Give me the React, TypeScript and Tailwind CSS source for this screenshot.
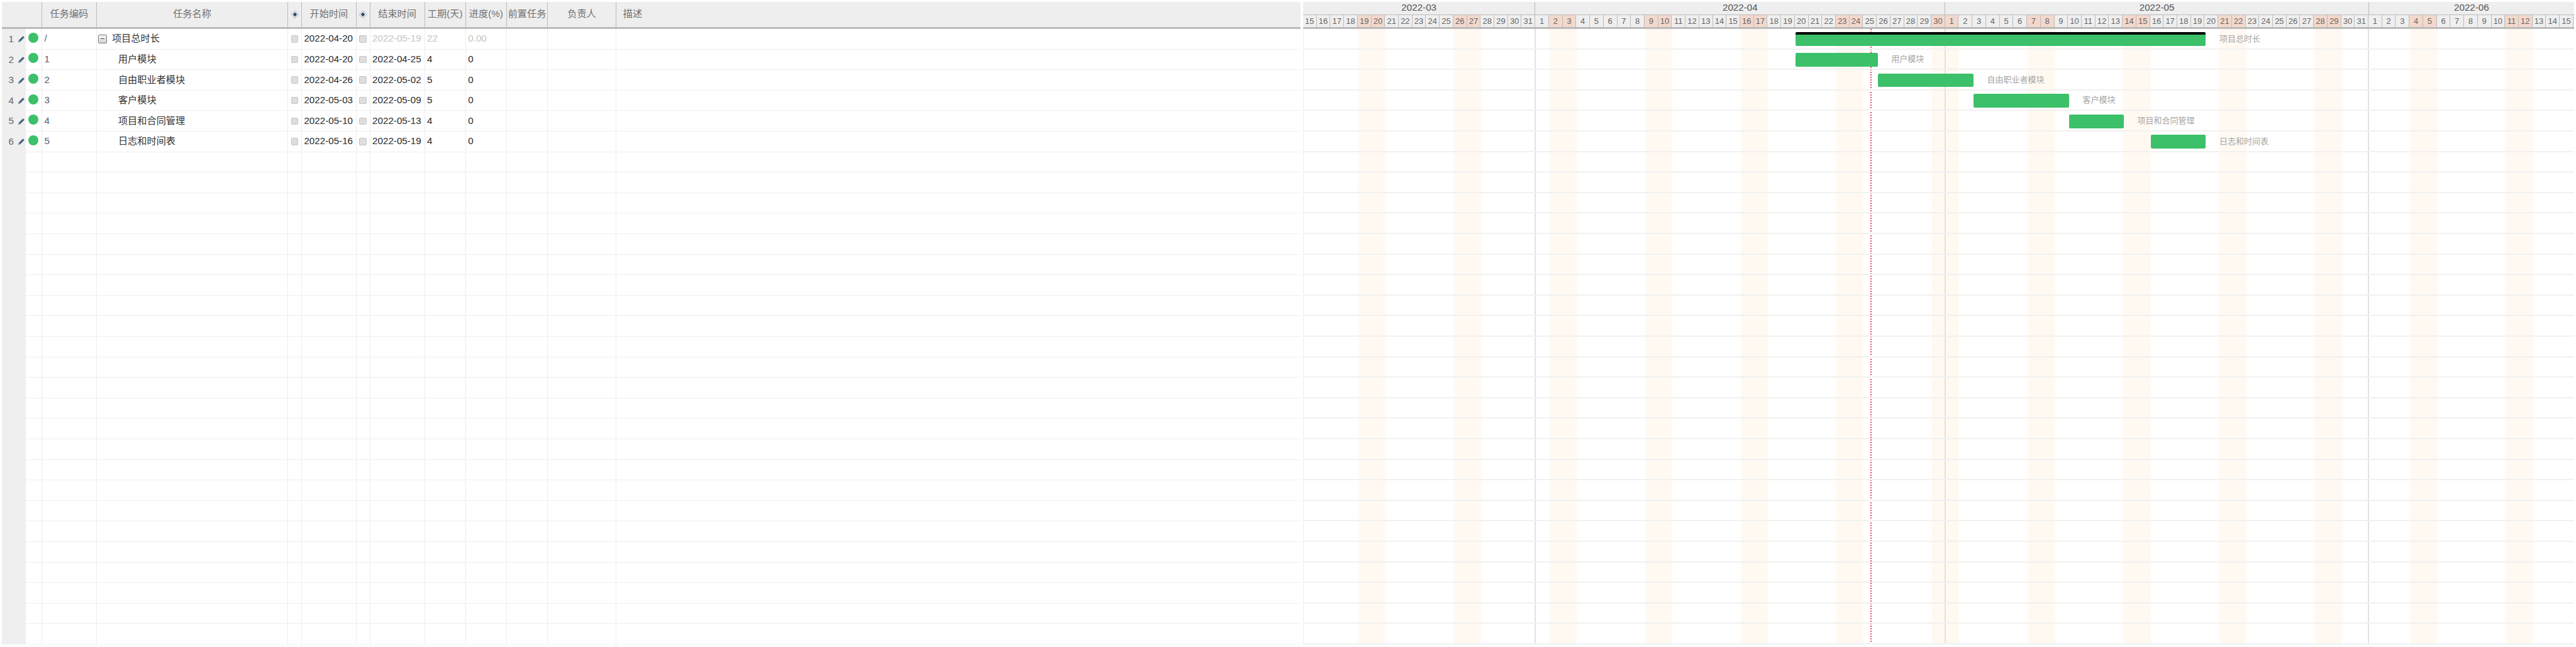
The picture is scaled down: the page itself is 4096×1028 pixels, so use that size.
const DAY_W = 21.73;
const ROW_COUNT = 30;

const GRID_COLS =
  "grid grid-cols-[38.3px_26px_87px_304.3px_21.7px_87px_21.7px_87px_65.2px_65.2px_65.2px_108.7px_1fr]";

const MONTHS = [
  { label: "2022-03", from: 15, to: 31, firstWeekend: 19 },
  { label: "2022-04", from: 1, to: 30, firstWeekend: 2 },
  { label: "2022-05", from: 1, to: 31, firstWeekend: 7 },
  { label: "2022-06", from: 1, to: 15, firstWeekend: 4 },
];

// one entry per day shown on the timeline
const DAYS = MONTHS.flatMap((m, mi) => {
  const out: { n: number; weekend: boolean; monthEnd: boolean; key: string }[] = [];
  for (let d = m.from; d <= m.to; d++) {
    const off = ((d - m.firstWeekend) % 7 + 7) % 7;
    // 1 May sits right after Saturday 30 Apr
    const weekend = off === 0 || off === 1 || (mi === 2 && d === 1) || (mi === 1 && d === 30);
    out.push({ n: d, weekend, monthEnd: d === m.to && mi < 3, key: `${m.label}-${d}` });
  }
  return out;
});

const TASKS = [
  { code: "/", name: "项目总时长", start: "2022-04-20", end: "2022-05-19", days: "22", progress: "0.00", parent: true, barFrom: 36, barTo: 66 },
  { code: "1", name: "用户模块", start: "2022-04-20", end: "2022-04-25", days: "4", progress: "0", parent: false, barFrom: 36, barTo: 42 },
  { code: "2", name: "自由职业者模块", start: "2022-04-26", end: "2022-05-02", days: "5", progress: "0", parent: false, barFrom: 42, barTo: 49 },
  { code: "3", name: "客户模块", start: "2022-05-03", end: "2022-05-09", days: "5", progress: "0", parent: false, barFrom: 49, barTo: 56 },
  { code: "4", name: "项目和合同管理", start: "2022-05-10", end: "2022-05-13", days: "4", progress: "0", parent: false, barFrom: 56, barTo: 60 },
  { code: "5", name: "日志和时间表", start: "2022-05-16", end: "2022-05-19", days: "4", progress: "0", parent: false, barFrom: 62, barTo: 66 },
];

function PencilIcon() {
  return (
    <svg width="12" height="12" viewBox="0 0 12 12" className="shrink-0">
      <path d="M8.6 1.2 L10.8 3.4 L4 10.2 L1 11 L1.8 8 Z" fill="#45607f" />
      <path d="M1.8 8 L4 10.2" stroke="#dfe4ea" strokeWidth="0.6" />
    </svg>
  );
}

function DiamondIcon() {
  return (
    <svg width="14" height="14" viewBox="0 0 14 14">
      <path d="M7 0.8 L13.2 7 L7 13.2 L0.8 7 Z" fill="none" stroke="#a9b4c0" strokeWidth="1" />
      <path d="M7 3.6 L10.4 7 L7 10.4 L3.6 7 Z" fill="#2c4a6e" />
    </svg>
  );
}

function Checkbox() {
  return <span className="block w-[11.5px] h-[11.5px] rounded-[2px] bg-[#dedede] border border-[#c4c4c4]" />;
}

function HeaderCell({ children, className = "" }: { children?: React.ReactNode; className?: string }) {
  return (
    <div className={`flex items-center justify-center border-r border-[#bbbbbb] whitespace-nowrap ${className}`}>
      {children}
    </div>
  );
}

function TableHeader() {
  return (
    <div className={`${GRID_COLS} h-[43.5px] bg-[#eeeeee] border-b-[3px] border-[#bbbbbb] text-[#707070]`}>
      <HeaderCell className="col-span-2" />
      <HeaderCell>任务编码</HeaderCell>
      <HeaderCell>任务名称</HeaderCell>
      <HeaderCell><DiamondIcon /></HeaderCell>
      <HeaderCell>开始时间</HeaderCell>
      <HeaderCell><DiamondIcon /></HeaderCell>
      <HeaderCell>结束时间</HeaderCell>
      <HeaderCell>工期(天)</HeaderCell>
      <HeaderCell>进度(%)</HeaderCell>
      <HeaderCell>前置任务</HeaderCell>
      <HeaderCell>负责人</HeaderCell>
      <div className="flex items-center pl-[11px]">描述</div>
    </div>
  );
}

function TableRow({ index }: { index: number }) {
  const task = TASKS[index];
  const cell = "flex items-center border-r border-[#eeeeee] border-b border-b-[#efefef] whitespace-nowrap";
  const muted = task?.parent ? "text-[#c4c4c4]" : "text-[#2a2a2a]";
  return (
    <div className={`${GRID_COLS} h-[32.6px]`}>
      <div className="flex items-center bg-[#efefef] pl-[11px] gap-[5px] text-[#666666]">
        {task && <span className="w-[9px]">{index + 1}</span>}
        {task && <PencilIcon />}
      </div>
      <div className={`${cell} justify-center`}>
        {task && <span className="block w-[16px] h-[16px] rounded-full bg-[#3cc06a] -mt-[4px]" />}
      </div>
      <div className={`${cell} pl-[3.5px] text-[#556070]`}>{task?.code}</div>
      <div className={`${cell} text-[#333333] ${task?.parent ? "pl-[2.5px]" : "pl-[34px]"}`}>
        {task?.parent && (
          <span className="relative block w-[14px] h-[14px] mr-[7.5px] rounded-[2px] border border-[#777777] bg-gradient-to-b from-[#f4f4f4] to-[#d4d4d4]">
            <span className="absolute left-[3px] right-[3px] top-[5px] h-[1.5px] bg-[#555555]" />
          </span>
        )}
        {task?.name}
      </div>
      <div className={`${cell} justify-center`}>{task && <Checkbox />}</div>
      <div className={`${cell} pl-[3.5px] text-[#2a2a2a]`}>{task?.start}</div>
      <div className={`${cell} justify-center`}>{task && <Checkbox />}</div>
      <div className={`${cell} pl-[3.5px] ${muted}`}>{task?.end}</div>
      <div className={`${cell} pl-[3.5px] ${muted}`}>{task?.days}</div>
      <div className={`${cell} pl-[3.5px] ${muted}`}>{task?.progress}</div>
      <div className={cell} />
      <div className={cell} />
      <div className="border-b border-[#efefef]" />
    </div>
  );
}

function TimelineHeader() {
  return (
    <div className="h-[43.5px] bg-[#eeeeee] border-b-[3px] border-[#bbbbbb] text-[#555555]">
      <div className="flex h-[21px] border-b border-[#bbbbbb]">
        {MONTHS.map((m, i) => (
          <div
            key={m.label}
            className={`flex items-center justify-center shrink-0 ${i < 3 ? "border-r border-[#bbbbbb]" : ""}`}
            style={{ width: (m.to - m.from + 1) * DAY_W }}
          >
            {m.label}
          </div>
        ))}
      </div>
      <div className="flex h-[19.5px] text-[13px] text-[#666666]">
        {DAYS.map((d) => (
          <div
            key={d.key}
            className={`flex items-center justify-center shrink-0 w-[21.73px] border-r border-[#bbbbbb] ${
              d.weekend ? "bg-[#f3d8cc]" : "bg-[#efefef]"
            }`}
          >
            {d.n}
          </div>
        ))}
      </div>
    </div>
  );
}

function TimelineRow({ index }: { index: number }) {
  const task = TASKS[index];
  return (
    <div className="relative h-[32.6px] border-b-2 border-[#f1f1f1]">
      {task && (
        <>
          <div
            className={`absolute top-[5.4px] h-[21.7px] rounded-[2px] bg-[#3cc06a] ${
              task.parent ? "border-t-[4px] border-black" : ""
            }`}
            style={{ left: task.barFrom * DAY_W, width: (task.barTo - task.barFrom) * DAY_W }}
          />
          <div
            className="absolute top-0 h-full flex items-center text-[13px] text-[#a5a5a5] whitespace-nowrap"
            style={{ left: task.barTo * DAY_W + DAY_W }}
          >
            {task.name}
          </div>
        </>
      )}
    </div>
  );
}

function Timeline() {
  return (
    <div className="w-[2021px] shrink-0">
      <TimelineHeader />
      <div className="relative border-l border-[#eeeeee]">
        {/* weekend stripes and month separators */}
        <div className="absolute inset-0 flex">
          {DAYS.map((d) => (
            <div
              key={d.key}
              className={`shrink-0 w-[21.73px] h-full ${d.weekend ? "bg-[#fff9f2]" : ""} ${
                d.monthEnd ? "border-r-[2px] border-[#e2e2e2]" : ""
              }`}
            />
          ))}
        </div>
        <div className="relative">
          {/* today marker, 25 Apr, stays under the bars */}
          <div className="absolute top-0 bottom-0 left-[901px] border-l-2 border-dotted border-[#e8506e]" />
          {Array.from({ length: ROW_COUNT }, (_, i) => (
            <TimelineRow key={i} index={i} />
          ))}
        </div>
      </div>
    </div>
  );
}

export default function App() {
  return (
    <div className="flex h-[1028px] w-[4096px] overflow-hidden bg-white pt-[2.6px] pl-[2.6px] text-[15.2px] font-['Liberation_Sans','Noto_Sans_CJK_SC',sans-serif]">
      <div className="w-[2065px] shrink-0 mr-[4.4px]">
        <TableHeader />
        {Array.from({ length: ROW_COUNT }, (_, i) => (
          <TableRow key={i} index={i} />
        ))}
      </div>
      <Timeline />
    </div>
  );
}
